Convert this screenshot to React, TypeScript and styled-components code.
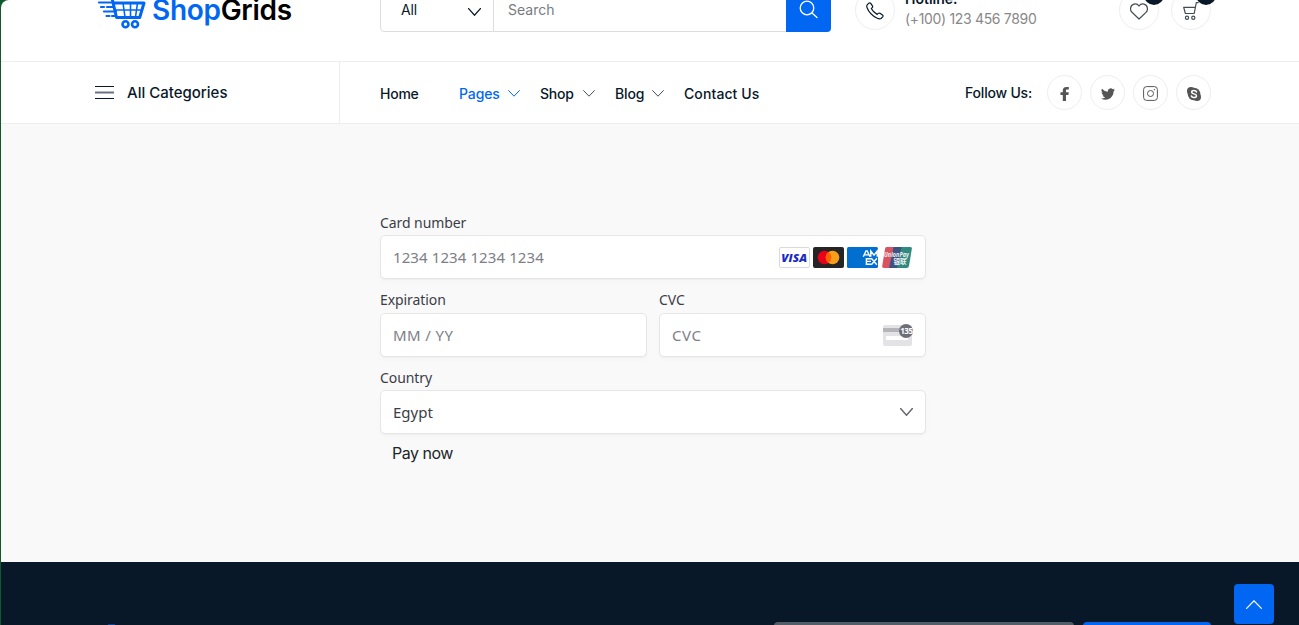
import React from "react";
import styled, { createGlobalStyle } from "styled-components";

const BLUE = "#0167f3";
const NAVY = "#081828";

const GlobalStyle = createGlobalStyle`
  * { box-sizing: border-box; }
  html, body { margin: 0; height: 625px; overflow: hidden; background: #0f5a2c; }
  body { font-family: Inter, "Liberation Sans", sans-serif; color: ${NAVY}; }
  svg { display: block; flex: none; }
`;

const Page = styled.div`
  height: 625px;
  margin-left: 1px;
  display: flex;
  flex-direction: column;
  overflow: hidden;
  border-top-left-radius: 8px;
  background: #fff;
`;

const Text = styled.span<{ $size?: number; $weight?: number; $track?: number; $color?: string }>`
  font-size: ${(p) => p.$size ?? 14}px;
  font-weight: ${(p) => p.$weight ?? 500};
  letter-spacing: ${(p) => p.$track ?? 0}px;
  color: ${(p) => p.$color ?? NAVY};
  line-height: 20px;
  white-space: nowrap;
`;

const Header = styled.header`
  height: 62px;
  flex: none;
  display: flex;
  align-items: flex-end;
  padding: 0 88px 29px 94px;
  border-bottom: 1px solid #eee;
  overflow: hidden;
`;

const Logo = styled.a`
  display: flex;
  align-items: flex-end;
  width: 286px;
  height: 50px;
  margin-left: -1px;
  padding-bottom: 3px;
`;

const LogoWords = styled.span`
  margin: 0 0 2px 5px;
  font-size: 28px;
  line-height: 34px;
  font-weight: 600;
  letter-spacing: -0.3px;
  color: #000;
  b { color: ${BLUE}; font-weight: 600; }
`;

const SearchBar = styled.div`
  display: flex;
  width: 451px;
  height: 45px;
`;

const SearchSelect = styled.div`
  width: 114px;
  display: flex;
  align-items: center;
  justify-content: space-between;
  padding: 0 12px 0 20px;
  border: 1px solid #ddd;
  border-radius: 4px 0 0 4px;
  svg { margin-top: 4px; }
`;

const SearchInput = styled.div`
  flex: 1;
  display: flex;
  align-items: center;
  padding: 0 0 0 14px;
  border: solid #ddd;
  border-width: 1px 0;
`;

const SearchButton = styled.button`
  width: 45px;
  padding: 1px 0 0 13px;
  border: 0;
  border-radius: 0 4px 4px 0;
  background: ${BLUE};
`;

const Circle = styled.div<{ $size: number; $drop?: number }>`
  position: relative;
  display: flex;
  align-items: center;
  justify-content: center;
  flex: none;
  width: ${(p) => p.$size}px;
  height: ${(p) => p.$size}px;
  padding-top: ${(p) => p.$drop ?? 0}px;
  border: 1px solid #eee;
  border-radius: 50%;
`;

const Hotline = styled.div`
  display: flex;
  align-items: flex-end;
  gap: 10px;
  margin: 0 0 2px 24px;
`;

const HotlineText = styled.div`
  display: flex;
  flex-direction: column;
  padding-bottom: 1px;
`;

const Actions = styled.div`
  display: flex;
  gap: 12px;
  margin: 0 0 2px auto;
`;

const Badge = styled.span`
  position: absolute;
  top: -6px;
  right: -6px;
  width: 20px;
  height: 20px;
  border-radius: 50%;
  background: ${NAVY};
  color: #fff;
  font-size: 11px;
  line-height: 20px;
  text-align: center;
`;

const NavBar = styled.nav`
  height: 62px;
  flex: none;
  display: flex;
  align-items: stretch;
  padding: 0 88px 0 94px;
  border-bottom: 1px solid #eee;
`;

const Categories = styled.div`
  width: 245px;
  display: flex;
  align-items: center;
  gap: 12px;
  border-right: 1px solid #eee;
  svg { margin-bottom: 1px; }
`;

const Menu = styled.div`
  display: flex;
  align-items: center;
  padding: 2px 0 0 40px;
`;

const MenuItem = styled.a<{ $width: number }>`
  display: flex;
  align-items: center;
  justify-content: space-between;
  width: ${(p) => p.$width}px;
  margin-right: 20px;
  &:first-child { margin-right: 40px; }
`;

const Follow = styled.div`
  display: flex;
  align-items: center;
  gap: 8px;
  margin-left: auto;
  & > span { margin-right: 7px; }
`;

const Main = styled.main`
  height: 438px;
  flex: none;
  padding: 88px 373px 0 379px;
  background: #f9f9f9;
`;

const Form = styled.form`
  display: flex;
  flex-direction: column;
  gap: 10px;
`;

const FieldRow = styled.div`
  display: grid;
  grid-template-columns: 1fr 1fr;
  gap: 12px;
`;

const Field = styled.label`
  display: flex;
  flex-direction: column;
  font-family: "Noto Sans", sans-serif;
`;

const FieldLabel = styled.span<{ $height?: number }>`
  height: ${(p) => p.$height ?? 23}px;
  font-size: 14px;
  line-height: 22px;
  letter-spacing: -0.08px;
  color: #3c3d48;
`;

const Control = styled.div<{ $color?: string; $track?: number }>`
  height: 44px;
  display: flex;
  align-items: center;
  justify-content: space-between;
  padding: 0 12px;
  border: 1px solid #e6e6e6;
  border-radius: 5px;
  background: #fff;
  box-shadow: 0 1px 1px rgba(0, 0, 0, 0.03), 0 3px 6px rgba(0, 0, 0, 0.02);
  font-size: 15px;
  letter-spacing: ${(p) => p.$track ?? 0}px;
  color: ${(p) => p.$color ?? "#7d7e87"};
`;

const CardBrands = styled.span`
  display: flex;
  gap: 3px;
  margin-right: 1px;
`;

const PayButton = styled.button`
  align-self: flex-start;
  margin-top: -1px;
  padding: 0 12px;
  border: 0;
  background: none;
  font-family: inherit;
`;

const Footer = styled.footer`
  flex: 1;
  display: flex;
  align-items: flex-end;
  background: ${NAVY};
  overflow: hidden;
`;

const FooterMark = styled.span`
  width: 7px;
  height: 1px;
  margin-left: 107px;
  background: #04439a;
`;

const Newsletter = styled.div`
  display: flex;
  gap: 9px;
  height: 3px;
  margin-left: 659px;
`;

const NewsletterPart = styled.div<{ $width: number; $color: string }>`
  width: ${(p) => p.$width}px;
  height: 45px;
  border-radius: 4px;
  background: ${(p) => p.$color};
`;

const ScrollTop = styled.a`
  position: fixed;
  right: 25px;
  bottom: 1px;
  width: 40px;
  height: 40px;
  display: flex;
  align-items: center;
  justify-content: center;
  border-radius: 4px;
  background: ${BLUE};
`;

const Chevron = ({ w = 12, h = 7, color = NAVY, up = false, stroke = 1 }: { w?: number; h?: number; color?: string; up?: boolean; stroke?: number }) => (
  <svg width={w} height={h} viewBox={`0 0 ${w} ${h}`} fill="none" stroke={color} strokeWidth={stroke} strokeLinecap="round">
    <path d={up ? `M.6 ${h - 0.6}L${w / 2} .8L${w - 0.6} ${h - 0.6}` : `M.6 .6L${w / 2} ${h - 0.8}L${w - 0.6} .6`} />
  </svg>
);

const LogoCart = () => (
  <svg width="53" height="42" viewBox="0 0 53 42" fill="none" stroke={BLUE} strokeWidth="3" strokeLinecap="round" strokeLinejoin="round">
    <path d="M17 7l5.500 23.500h23M20.500 16H50l-4.300 14.500" />
    <path d="M22 23h25M29 16l2 14M36.500 16v14M43.500 16l-2 14" strokeWidth="1.600" />
    <path d="M5 15.500h14M7 20h3M13 20h7M10 24.500h12M12.500 29h3M18 29h4" strokeWidth="2.200" />
    <circle cx="31.500" cy="37.200" r="3" strokeWidth="2.600" />
    <circle cx="41" cy="37.200" r="3" strokeWidth="2.600" />
  </svg>
);

const SearchIcon = () => (
  <svg width="20" height="20" viewBox="0 0 20 20" fill="none" stroke="#fff" strokeWidth="1.300" strokeLinecap="round">
    <circle cx="8" cy="8" r="6.800" />
    <path d="M13 13l5 4.500" />
  </svg>
);

const PhoneIcon = () => (
  <svg width="18" height="18" viewBox="0 0 18 18" fill="none" stroke={NAVY} strokeWidth="1.200" strokeLinejoin="round">
    <path d="M1.200 2.800L2.800 1.200Q3.900.400 4.800 1.400L6.400 3.800Q7 4.800 6.200 5.600L5.300 6.600Q6.900 10.100 11.200 12.400L12.200 11.400Q13.100 10.700 14 11.300L16.500 13Q17.500 13.800 16.700 14.800L15 16.500Q13.800 17.400 10.800 16C6 13.600 2.800 10 1.200 6Q.300 3.800 1.200 2.800Z" />
  </svg>
);

const HeartIcon = () => (
  <svg width="18" height="17" viewBox="0 0 18 17" fill="none" stroke="#444d55" strokeWidth="1.200" strokeLinejoin="round">
    <path d="M9 16L2 9.300C.600 7.900.400 6.800.600 5.200C1 .800 6.600-.600 9 3C11.400-.600 17 .800 17.400 5.200C17.600 6.800 17.400 7.900 16 9.300Z" />
  </svg>
);

const CartIcon = () => (
  <svg width="16" height="18" viewBox="0 0 16 18" fill="none" stroke="#444d55" strokeWidth="1.200" strokeLinecap="round" strokeLinejoin="round">
    <path d="M15.200.700h-1.900L11.200 11.500H2.400L.700 5.300h11.700" />
    <circle cx="4" cy="15.700" r="1.600" />
    <circle cx="10.300" cy="15.700" r="1.600" />
  </svg>
);

const FacebookIcon = () => (
  <svg width="10" height="14" viewBox="0 0 10 14" fill="#555">
    <path d="M2.800 14V8H.500V5.300h2.300V3.400C2.800 1.100 4.300 0 6.400 0L8.800.100v2.400H7.200C6.200 2.500 6 3 6 3.700v1.600h2.800L8.300 8H6v6Z" />
  </svg>
);

const TwitterIcon = () => (
  <svg width="14" height="14" viewBox="0 0 24 24" fill="#555">
    <path d="M24 4.560a9.800 9.800 0 0 1-2.830.780 4.930 4.930 0 0 0 2.170-2.730 9.900 9.900 0 0 1-3.130 1.200A4.920 4.920 0 0 0 11.820 8.300 14 14 0 0 1 1.670 3.150a4.930 4.930 0 0 0 1.520 6.570 4.900 4.900 0 0 1-2.230-.610v.060a4.930 4.930 0 0 0 3.950 4.830 5 5 0 0 1-2.220.080 4.930 4.930 0 0 0 4.600 3.420A9.900 9.900 0 0 1 0 19.540 13.940 13.940 0 0 0 7.550 21.750c9.140 0 14.300-7.720 14-14.640A10 10 0 0 0 24 4.560Z" />
  </svg>
);

const InstagramIcon = () => (
  <svg width="15" height="15" viewBox="0 0 15 15" fill="none" stroke="#555" strokeWidth="1">
    <rect x=".600" y=".600" width="13.800" height="13.800" rx="3" />
    <circle cx="7.500" cy="7.500" r="3" />
    <circle cx="11.400" cy="3.600" r=".700" fill="#555" stroke="none" />
  </svg>
);

const SkypeIcon = () => (
  <svg width="14" height="14" viewBox="0 0 14 14">
    <circle cx="4" cy="4" r="4" fill="#555" />
    <circle cx="10" cy="10" r="4" fill="#555" />
    <circle cx="7" cy="7" r="6.300" fill="#555" />
    <path d="M9.500 5C9 3.200 4.700 3 4.700 5.200C4.700 7.500 9.500 6.200 9.500 8.900C9.500 11.200 4.800 11 4.400 9" fill="none" stroke="#fff" strokeWidth="1.500" strokeLinecap="round" />
  </svg>
);

const Visa = () => (
  <svg width="31" height="21" viewBox="0 0 31 21">
    <rect x=".500" y=".500" width="30" height="20" rx="1.500" fill="#fff" stroke="#d9d9de" />
    <text x="2.300" y="14.800" fontFamily="Open Sans" fontWeight="800" fontStyle="italic" fontSize="11" textLength="26" lengthAdjust="spacingAndGlyphs" fill="#1a2bc3">VISA</text>
  </svg>
);

const Mastercard = () => (
  <svg width="31" height="21" viewBox="0 0 31 21">
    <rect width="31" height="21" rx="2" fill="#252525" />
    <circle cx="11.500" cy="10.500" r="6.800" fill="#eb001b" />
    <circle cx="19.500" cy="10.500" r="6.800" fill="#f79e1b" />
    <path d="M15.500 5a6.800 6.800 0 0 1 0 11a6.800 6.800 0 0 1 0-11Z" fill="#ff5f00" />
  </svg>
);

const Amex = () => (
  <svg width="31" height="21" viewBox="0 0 31 21">
    <rect width="31" height="21" rx="1.500" fill="#016fd0" />
    <g fill="none" stroke="#fff" strokeWidth="1.400">
      <path d="M16.300 9.800L19 3.900h1.200L23 9.800M17.600 7.900h4M23.800 9.800V4L27 8.200L30.200 4v5.800" />
      <path d="M24 11.800h-4.600v5.400H24M19.400 14.400H24M24.300 11.300l5.600 6.400M29.900 11.300l-5.600 6.400" />
    </g>
  </svg>
);

const UnionPay = () => (
  <svg width="31" height="21" viewBox="0 0 31 21">
    <path d="M5.500 0H16l-4.500 21H3Q.800 21 1.200 19L4 2Q4.300 0 5.500 0Z" fill="#d95360" />
    <path d="M12.500 0h10L18 21H8Z" fill="#3d5482" />
    <path d="M20.500 0h8.500q2.300 0 1.800 2L28 19q-.500 2-2.300 2H16Z" fill="#318a80" />
    <text x="3" y="10.200" fontFamily="Noto Sans" fontWeight="700" fontStyle="italic" fontSize="7" textLength="25" lengthAdjust="spacingAndGlyphs" fill="#eef3f5">UnionPay</text>
    <text x="12.500" y="17.200" fontFamily="Noto Sans CJK SC" fontWeight="700" fontSize="6.500" fill="#eef3f5">银联</text>
  </svg>
);

const CvcCard = () => (
  <svg width="30" height="24" viewBox="0 0 30 24">
    <rect x="0" y="2" width="29" height="21" rx="2" fill="#e3e3e5" />
    <rect y="5" width="29" height="4" fill="#b5b5b9" />
    <rect x="3" y="13" width="22" height="4" rx=".500" fill="#fff" />
    <circle cx="23" cy="8" r="7" fill="#6d6e78" />
    <text x="17.300" y="11" fontFamily="Open Sans" fontWeight="700" fontSize="8" letterSpacing="-.500" fill="#fff">135</text>
  </svg>
);

const menu = [
  { label: "Home", width: 39, track: -0.25 },
  { label: "Pages", width: 61, track: -0.1, active: true, arrow: true },
  { label: "Shop", width: 55, track: -0.2, arrow: true },
  { label: "Blog", width: 49, track: -0.15, arrow: true },
  { label: "Contact Us", width: 76, track: 0.1 },
];

export default function App() {
  return (
    <>
      <GlobalStyle />
      <Page>
        <Header>
          <Logo>
            <LogoCart />
            <LogoWords><b>Shop</b>Grids</LogoWords>
          </Logo>
          <SearchBar>
            <SearchSelect>
              <Text $weight={400} $track={-0.2}>All</Text>
              <Chevron w={13} h={8} stroke={1.3} />
            </SearchSelect>
            <SearchInput><Text $weight={400} $color="#777c81">Search</Text></SearchInput>
            <SearchButton><SearchIcon /></SearchButton>
          </SearchBar>
          <Hotline>
            <Circle $size={40} $drop={1}><PhoneIcon /></Circle>
            <HotlineText>
              <Text $weight={600}>Hotline:</Text>
              <Text $weight={400} $track={-0.33} $color="#888">(+100) 123 456 7890</Text>
            </HotlineText>
          </Hotline>
          <Actions>
            <Circle $size={40} $drop={2}><HeartIcon /><Badge>0</Badge></Circle>
            <Circle $size={40} $drop={2}><CartIcon /><Badge>0</Badge></Circle>
          </Actions>
        </Header>
        <NavBar>
          <Categories>
            <svg width="20" height="13" viewBox="0 0 20 13">
              <path d="M0 .500h19M0 12.500h19" stroke={NAVY} />
              <path d="M0 6.500h19" stroke="#6b747e" strokeWidth="2" />
            </svg>
            <Text $size={15}>All Categories</Text>
          </Categories>
          <Menu>
            {menu.map((m) => (
              <MenuItem key={m.label} $width={m.width}>
                <Text $track={m.track} $color={m.active ? BLUE : NAVY}>{m.label}</Text>
                {m.arrow && <Chevron color={m.active ? BLUE : "#444d57"} />}
              </MenuItem>
            ))}
          </Menu>
          <Follow>
            <Text $track={-0.2}>Follow Us:</Text>
            <Circle $size={35} $drop={2}><FacebookIcon /></Circle>
            <Circle $size={35} $drop={2}><TwitterIcon /></Circle>
            <Circle $size={35} $drop={2}><InstagramIcon /></Circle>
            <Circle $size={35} $drop={2}><SkypeIcon /></Circle>
          </Follow>
        </NavBar>
        <Main>
          <Form>
            <Field>
              <FieldLabel>Card number</FieldLabel>
              <Control $track={0.1}>
                1234 1234 1234 1234
                <CardBrands><Visa /><Mastercard /><Amex /><UnionPay /></CardBrands>
              </Control>
            </Field>
            <FieldRow>
              <Field>
                <FieldLabel $height={24}>Expiration</FieldLabel>
                <Control $track={0.4}>MM / YY</Control>
              </Field>
              <Field>
                <FieldLabel $height={24}>CVC</FieldLabel>
                <Control $track={0.6}>CVC<CvcCard /></Control>
              </Field>
            </FieldRow>
            <Field>
              <FieldLabel>Country</FieldLabel>
              <Control $color="#3c3d48">Egypt<Chevron w={13} h={8} color="#66676f" stroke={1.5} /></Control>
            </Field>
            <PayButton type="button"><Text $size={16} $weight={400} $track={-0.5} $color="#212529">Pay now</Text></PayButton>
          </Form>
        </Main>
        <Footer>
          <FooterMark />
          <Newsletter>
            <NewsletterPart $width={300} $color="#525d68" />
            <NewsletterPart $width={128} $color={BLUE} />
          </Newsletter>
        </Footer>
      </Page>
      <ScrollTop><Chevron up w={16} h={9} color="#fff" stroke={1.2} /></ScrollTop>
    </>
  );
}
